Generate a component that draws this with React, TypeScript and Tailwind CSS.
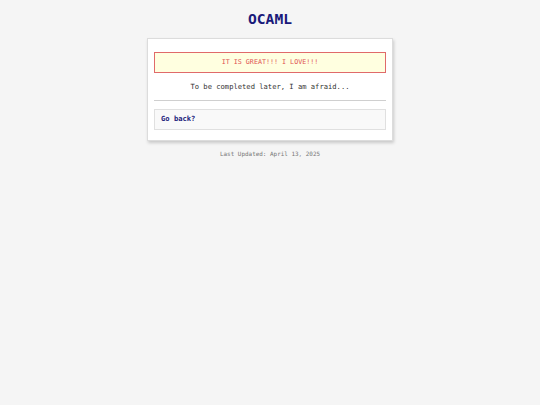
export default function App() {
  return (
    <div className="min-h-[405px] w-full bg-[#f5f5f5] font-['DejaVu_Sans_Mono',monospace] text-[#333]">
      <div className="flex flex-col items-center pt-[10px]">
        {/* Header */}
        <h1 className="text-[14.6px] font-bold leading-[17px] tracking-normal text-[#1a1a7a]">OCAML</h1>

        {/* Main card */}
        <div className="mt-[11px] w-[246px] border border-[#dcdcdc] bg-white px-[6px] pb-[10px] pt-[13px] shadow-[1px_2px_3px_rgba(0,0,0,0.18)]">
          <div className="flex h-[21px] items-center justify-center border-[1.5px] border-[#e06a6a] bg-[#ffffe0] text-[6.7px] text-[#e05050]">
            IT IS GREAT!!! I LOVE!!!
          </div>
          <p className="mt-[7px] text-center text-[7.15px] leading-[13px] text-[#333]">
            To be completed later, I am afraid...
          </p>
          <div className="mt-[7px] h-px bg-[#cfcfcf]" />
          <div className="mt-[8px] flex h-[21px] items-center border border-[#e0e0e0] bg-[#f9f9f9] px-[6px]">
            <a className="text-[7.15px] font-bold text-[#1a1a7a]">Go back?</a>
          </div>
        </div>

        {/* Footer */}
        <p className="mt-[9px] text-[5.95px] leading-[8px] text-[#777]">Last Updated: April 13, 2025</p>
      </div>
    </div>
  );
}
